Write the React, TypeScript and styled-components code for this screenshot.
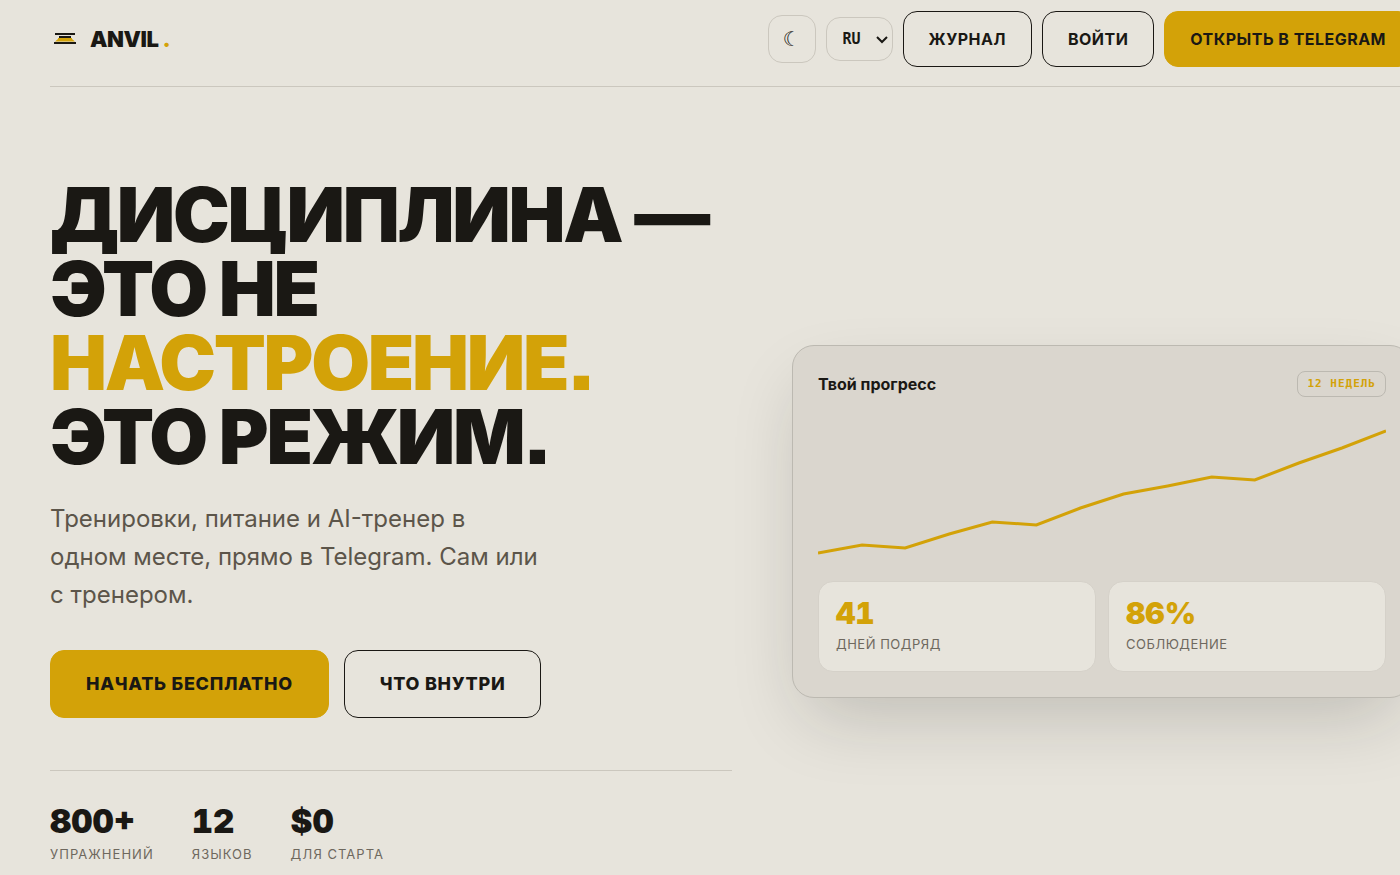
import React from "react";
import styled, { createGlobalStyle, css } from "styled-components";

const c = {
  bg: "#e7e4dc",
  panel: "#dad6ce",
  line: "#cbc7be",
  panelLine: "#bcb9b1",
  ink: "#1a1814",
  muted: "#5c554a",
  soft: "#6e685e",
  gold: "#d3a208",
};

const GlobalStyle = createGlobalStyle`
  *, *::before, *::after { box-sizing: border-box; }
  html { background: ${c.bg}; }
  body {
    margin: 0;
    overflow-x: hidden;
    background: ${c.bg};
    color: ${c.ink};
    font-family: Inter, "Liberation Sans", sans-serif;
  }
  h1, h2, p, dl, dd, dt { margin: 0; }
`;

const Page = styled.div`
  margin-right: -12px;
  padding-left: 50px;
`;

const Header = styled.header`
  display: flex;
  align-items: center;
  justify-content: space-between;
  padding: 11px 0 19px;
  border-bottom: 1px solid ${c.line};
`;

const Logo = styled.a`
  display: flex;
  align-items: center;
  gap: 13px;
  padding-left: 3px;
  color: ${c.ink};
  font-size: 22px;
  line-height: 28px;
  font-weight: 900;
  letter-spacing: -0.02em;
  text-decoration: none;
`;

const LogoDot = styled.span`
  margin-left: 4px;
  color: ${c.gold};
`;

const Nav = styled.nav`
  display: flex;
  align-items: center;
  gap: 10px;
`;

const ThemeButton = styled.button`
  width: 48px;
  height: 48px;
  padding: 0;
  border: 1px solid ${c.line};
  border-radius: 14px;
  background: transparent;
  color: ${c.ink};
  font-family: "DejaVu Sans", sans-serif;
  font-size: 20px;
  line-height: 24px;
`;

const LangField = styled.label`
  position: relative;
  display: block;
`;

const LangSelect = styled.select`
  appearance: none;
  width: 67px;
  height: 44px;
  padding: 0 0 0 16px;
  border: 1px solid ${c.line};
  border-radius: 14px;
  background: transparent;
  color: ${c.ink};
  font-family: "DejaVu Sans Mono", monospace;
  font-size: 15px;
  font-weight: 700;
`;

const Chevron = styled.svg`
  position: absolute;
  right: 4px;
  top: 16px;
  pointer-events: none;
`;

const Button = styled.a<{ $primary?: boolean; $large?: boolean }>`
  display: flex;
  align-items: center;
  height: 56px;
  padding: 0 25px;
  border: 1px solid ${c.ink};
  border-radius: 14px;
  color: ${c.ink};
  font-size: 16px;
  line-height: 24px;
  font-weight: 700;
  letter-spacing: 0.03em;
  text-decoration: none;
  text-transform: uppercase;
  white-space: nowrap;
  ${(p) =>
    p.$primary &&
    css`
      border-color: ${c.gold};
      background: ${c.gold};
    `}
  ${(p) =>
    p.$large &&
    css`
      height: 68px;
      padding: 0 35px;
      font-size: 18px;
      font-weight: 800;
      letter-spacing: 0.04em;
    `}
`;

const Hero = styled.main`
  display: grid;
  grid-template-columns: minmax(0, 11fr) minmax(0, 10fr);
  align-items: center;
  gap: 60px;
  padding: 90px 0 60px;
`;

const Title = styled.h1`
  font-size: 76px;
  line-height: 74px;
  font-weight: 900;
  font-feature-settings: "ss07";
  letter-spacing: -0.03em;
  text-transform: uppercase;
`;

const Accent = styled.span`
  color: ${c.gold};
`;

const Lead = styled.p`
  max-width: 494px;
  margin-top: 27px;
  color: ${c.muted};
  font-size: 24px;
  line-height: 38px;
`;

const Actions = styled.div`
  display: flex;
  gap: 15px;
  margin-top: 36px;
`;

const Stats = styled.dl`
  display: flex;
  gap: 38px;
  margin-top: 52px;
  padding-top: 29px;
  border-top: 1px solid ${c.line};
`;

const Stat = styled.div`
  display: flex;
  flex-direction: column-reverse;
`;

const StatLabel = styled.dt<{ $wide?: boolean }>`
  color: ${c.soft};
  font-size: 13px;
  line-height: 24px;
  letter-spacing: ${(p) => (p.$wide ? "0.08em" : "0.04em")};
  text-transform: uppercase;
`;

const StatValue = styled.dd<{ $gold?: boolean }>`
  color: ${(p) => (p.$gold ? c.gold : c.ink)};
  font-size: ${(p) => (p.$gold ? 30 : 33)}px;
  line-height: ${(p) => (p.$gold ? 34 : 42)}px;
  font-weight: 900;
  font-variant-numeric: tabular-nums;
`;

const Card = styled.section`
  padding: 25px;
  border: 1px solid ${c.panelLine};
  border-radius: 22px;
  background: ${c.panel};
  box-shadow: 0 30px 75px -15px rgba(26, 24, 20, 0.2);
`;

const CardHead = styled.div`
  display: flex;
  align-items: center;
  justify-content: space-between;
`;

const CardTitle = styled.h2`
  font-size: 16px;
  line-height: 24px;
  font-weight: 700;
`;

const Badge = styled.span`
  padding: 0 9px;
  border: 1px solid ${c.panelLine};
  border-radius: 8px;
  color: ${c.gold};
  font-family: "DejaVu Sans Mono", monospace;
  font-size: 11px;
  line-height: 24px;
  font-weight: 700;
  letter-spacing: 1px;
  text-transform: uppercase;
`;

const Chart = styled.svg`
  display: block;
  width: 100%;
  height: 148px;
  margin: 18px 0;
`;

const Tiles = styled.dl`
  display: grid;
  grid-template-columns: 1fr 1fr;
  gap: 12px;
`;

const Tile = styled(Stat)`
  gap: 2px;
  padding: 14px 17px 15px;
  border: 1px solid #d5d1c9;
  border-radius: 15px;
  background: ${c.bg};
`;

const points =
  "0,138 44,130 87,133 131,119 174,107 218,110 262,93 305,79 349,71 393,62 436,65 480,48 523,33 567,16";

const heroStats = [
  ["800+", "упражнений"],
  ["12", "языков"],
  ["$0", "для старта"],
];

const progress = [
  ["41", "дней подряд"],
  ["86%", "соблюдение"],
];

function AnvilMark() {
  return (
    <svg width="24" height="12" viewBox="0 0 24 12" aria-hidden="true">
      <rect x="2" y="0" width="20" height="2" fill={c.ink} />
      <path d="M5 5h14v1l3 2.500H2L5 6z" fill={c.gold} />
      <rect x="6" y="3" width="12" height="2" fill={c.ink} />
      <rect x="1" y="9" width="22" height="2" fill={c.ink} />
    </svg>
  );
}

export default function App() {
  return (
    <>
      <GlobalStyle />
      <Page>
        <Header>
          <Logo href="#">
            <AnvilMark />
            <span>
              ANVIL<LogoDot>.</LogoDot>
            </span>
          </Logo>
          <Nav>
            <ThemeButton type="button" aria-label="Тема">☾</ThemeButton>
            <LangField>
              <LangSelect aria-label="Язык" defaultValue="ru">
                <option value="ru">RU</option>
                <option value="en">EN</option>
              </LangSelect>
              <Chevron width="14" height="14" viewBox="0 0 14 14" aria-hidden="true">
                <path d="M2 4l5 5 5-5" fill="none" stroke={c.ink} strokeWidth="2" />
              </Chevron>
            </LangField>
            <Button href="#journal">Журнал</Button>
            <Button href="#login">Войти</Button>
            <Button href="#telegram" $primary>Открыть в Telegram</Button>
          </Nav>
        </Header>
        <Hero>
          <div>
            <Title>
              Дисциплина —<br />
              это не<br />
              <Accent>настроение.</Accent>
              <br />
              это режим.
            </Title>
            <Lead>Тренировки, питание и AI-тренер в одном месте, прямо в Telegram. Сам или с тренером.</Lead>
            <Actions>
              <Button href="#start" $primary $large>Начать бесплатно</Button>
              <Button href="#inside" $large>Что внутри</Button>
            </Actions>
            <Stats>
              {heroStats.map(([value, label]) => (
                <Stat key={label}>
                  <StatLabel $wide>{label}</StatLabel>
                  <StatValue>{value}</StatValue>
                </Stat>
              ))}
            </Stats>
          </div>
          <Card>
            <CardHead>
              <CardTitle>Твой прогресс</CardTitle>
              <Badge>12 недель</Badge>
            </CardHead>
            <Chart viewBox="0 0 567 148" preserveAspectRatio="none" aria-hidden="true">
              <polyline points={points} fill="none" stroke={c.gold} strokeWidth="3" vectorEffect="non-scaling-stroke" />
            </Chart>
            <Tiles>
              {progress.map(([value, label]) => (
                <Tile key={label}>
                  <StatLabel>{label}</StatLabel>
                  <StatValue $gold>{value}</StatValue>
                </Tile>
              ))}
            </Tiles>
          </Card>
        </Hero>
      </Page>
    </>
  );
}
